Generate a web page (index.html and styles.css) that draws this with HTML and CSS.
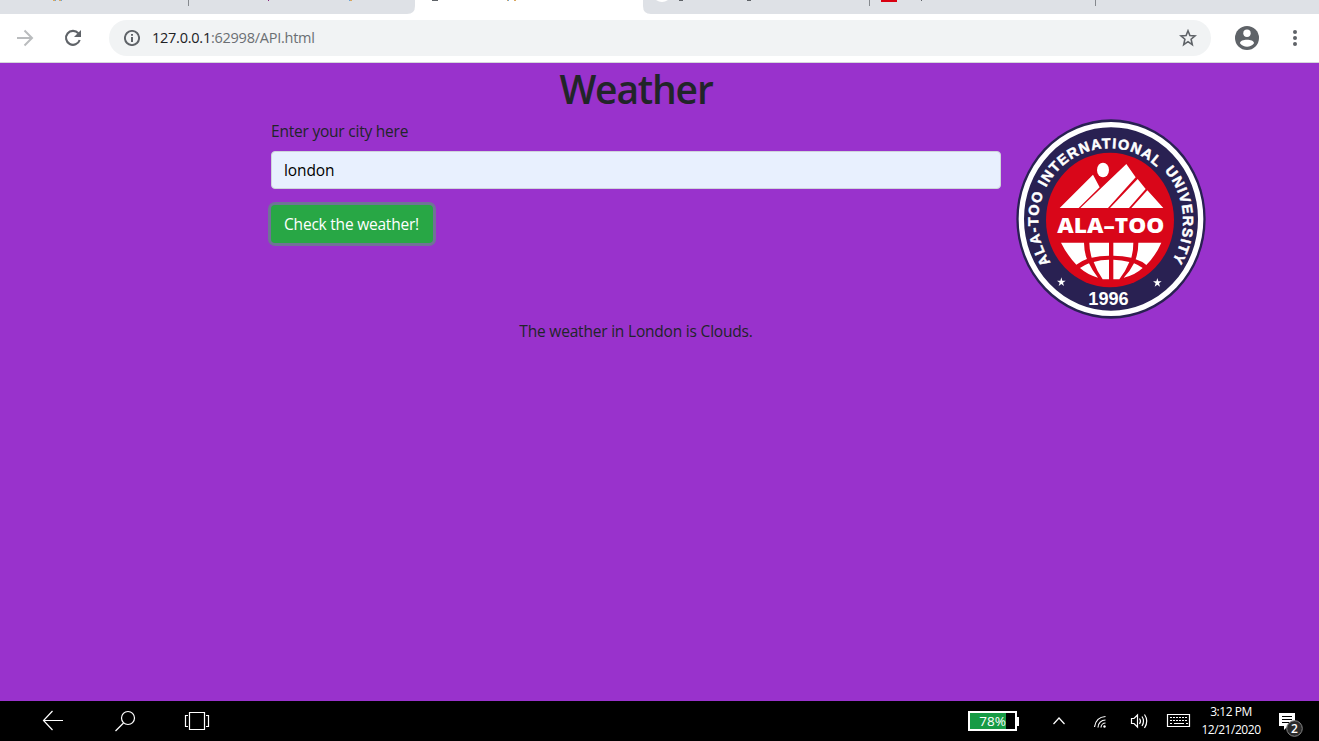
FILE: index.html
```html
<!DOCTYPE html>
<html lang="en">
<head>
<meta charset="utf-8">
<title>Weather</title>
<link rel="stylesheet" href="styles.css">
</head>
<body>
<header class="browser">
  <svg class="tabs" width="1319" height="14" viewBox="0 0 1319 14">
    <rect width="1319" height="14" fill="#dee1e6"/>
    <path d="M407 14Q415 14 415 6V0H643V6Q643 14 651 14Z" fill="#fff"/>
    <path d="M188.500 0V6M869.500 0V6M1095.500 0V6" stroke="#85898e"/>
    <path d="M881 0H897V2H881Z" fill="#d90011"/>
    <path d="M656 0Q662 4 668 0Z" fill="#fff"/>
    <path d="M53 0h2M59 0h2M350 0h2M507 0h2M514 0h2" stroke="#d9a75f" stroke-width="2"/>
    <path d="M55 0h1M61 0h1M349 0h1M508 0h1" stroke="#6aa6dc" stroke-width="2"/>
    <path d="M268 0h1" stroke="#8a2080" stroke-width="2"/>
    <path d="M432 0h6M679 0h4M747 0h4M921 0h1" stroke="#5f6368" stroke-width="2"/>
  </svg>
  <div class="toolbar">
    <svg class="forward" width="18" height="18" viewBox="0 0 18 18" fill="none" stroke="#babcbe" stroke-width="2"><path d="M1 9H16M8.500 1.500L16 9L8.500 16.500"/></svg>
    <svg class="reload" width="18" height="18" viewBox="0 0 18 18"><path d="M14.300 4.200A7 7 0 1 0 15.700 11" fill="none" stroke="#5f6368" stroke-width="2.100"/><path d="M17 1V8H10Z" fill="#5f6368"/></svg>
    <div class="omnibox">
      <svg width="16" height="16" viewBox="0 0 16 16"><circle cx="8" cy="8" r="7.100" fill="none" stroke="#5f6368" stroke-width="1.900"/><path d="M7 3.900h2v1.900H7zM7 7h2v5H7z" fill="#5f6368"/></svg>
      <span class="url"><b>127.0.0.1</b>:62998/API.html</span>
      <svg class="star" width="18" height="18" viewBox="0 0 18 18"><path d="M9 1.800L10.900 6.500L16 6.900L12.100 10.200L13.300 15.700L9 12.700L4.700 15.700L5.900 10.200L2 6.900L7.100 6.500Z" fill="none" stroke="#5f6368" stroke-width="1.600"/></svg>
    </div>
    <svg class="avatar" width="24" height="24" viewBox="0 0 24 24"><circle cx="12" cy="12" r="12" fill="#5f6368"/><circle cx="12" cy="7.300" r="3.700" fill="#fff"/><path d="M5 17.200C5 12.700 19 12.700 19 17.200C15.800 21.800 8.200 21.800 5 17.200Z" fill="#fff"/></svg>
    <svg class="more" width="4" height="16" viewBox="0 0 4 16" fill="#5f6368"><circle cx="2" cy="2" r="2"/><circle cx="2" cy="8" r="2"/><circle cx="2" cy="14" r="2"/></svg>
  </div>
</header>
<main class="page">
  <h1><span>Weather</span></h1>
  <div class="row">
    <form class="form">
      <label for="city">Enter your city here</label>
      <input id="city" class="city" type="text" value="london">
      <button class="check" type="button">Check the weather!</button>
    </form>
    <svg class="logo" width="190" height="200" viewBox="30 27 570 600">
      <ellipse cx="315" cy="327" rx="284" ry="299" fill="#292152"/>
      <ellipse cx="315" cy="327" rx="269" ry="283" fill="none" stroke="#fff" stroke-width="16"/>
      <ellipse cx="312" cy="330" rx="192" ry="202" fill="#d90619"/>
      <path id="ring" d="M134 458A213 219 0 1 1 494 443" fill="none"/>
      <text class="ringtext"><textPath href="#ring" textLength="628">ALA-TOO INTERNATIONAL</textPath></text>
      <path id="ring2" d="M475 182A213 222 0 0 1 492 462" fill="none"/>
      <text class="ringtext"><textPath href="#ring2" textLength="290">UNIVERSITY</textPath></text>
      <g fill="#fff">
        <ellipse cx="291" cy="180" rx="18" ry="22"/>
        <path d="M161 294L261 194L281 232L218 294ZM223 294L361 162L389 202L306 294ZM312 294L395 207L419 237L369 294ZM376 294L424 241L472 294Z"/>
        <path d="M165 398H234Q235 430 243 447Q225 453 211 464Q184 436 165 398ZM250 398H309V437Q281 437 257 443Q250 421 250 398ZM322 398H382Q382 422 376 443Q350 437 322 437ZM397 398H466Q449 437 421 465Q406 453 389 448Q397 424 397 398ZM222 474Q236 465 249 460Q258 481 276 503Q244 494 222 474ZM263 456Q284 449 309 449V508H290Q273 484 263 456ZM322 449Q348 450 370 456Q359 484 340 508H322ZM384 460Q397 465 410 474Q386 496 353 503Q373 483 384 460Z"/>
        <path d="M166 502L169 512H179L171 518L174 528L166 522L158 528L161 518L153 512H163ZM454 504L457 514H467L459 520L462 530L454 524L446 530L449 520L441 514H451Z"/>
      </g>
      <text class="name" x="154" y="368" textLength="321" lengthAdjust="spacingAndGlyphs">ALA–TOO</text>
      <text class="year" x="247" y="584" textLength="121" lengthAdjust="spacingAndGlyphs">1996</text>
    </svg>
  </div>
  <p class="result"><span>The weather in London is Clouds.</span></p>
</main>
<footer class="taskbar">
  <svg class="nav" width="210" height="40" viewBox="0 0 210 40" fill="none" stroke="#fff" stroke-width="1.200">
    <path d="M43.500 19.500H63M52.500 10L43.500 19.500L52.500 29"/>
    <circle cx="128" cy="17" r="6.500"/><path d="M123.500 22L115.500 30"/>
    <path d="M189.500 11.500H204.500V28.500H189.500ZM188 14.500H185.500V25.500H188M206 14.500H208.500V25.500H206"/>
  </svg>
  <div class="battery"><span>78%</span></div>
  <svg class="tray" width="140" height="40" viewBox="1051 701 140 40" fill="none" stroke="#fff" stroke-width="1.200">
    <path d="M1053.500 724L1059 718L1064.500 724"/>
    <g><path d="M1098 727.500A7.500 7.500 0 0 1 1105.500 720M1101 727.500A4.500 4.500 0 0 1 1105.500 723" /><path d="M1094.500 727Q1096 717 1105.500 716.500"/><circle cx="1104.500" cy="726.500" r="1.200" fill="#fff" stroke="none"/></g>
    <path d="M1131.500 718.500H1134L1137.500 715V727L1134 723.500H1131.500ZM1139.500 718.500Q1141.500 721 1139.500 724M1142 716.500Q1145 721 1142 726M1144.500 714.500Q1149 721 1144.500 728"/>
    <path d="M1167.500 714.500H1189.500V726.500H1167.500Z"/><path d="M1170 717.500H1188M1170 720.500H1188" stroke-dasharray="2 1"/><path d="M1170 723.500H1172M1174 723.500H1184M1186 723.500H1188"/>
  </svg>
  <div class="clock"><span class="time">3:12 PM</span><span class="date">12/21/2020</span></div>
  <svg class="notice" width="26" height="40" viewBox="1278 701 26 40">
    <path d="M1279 713H1295V726H1288L1284 730V726H1279Z" fill="#fff"/><path d="M1282 716.500H1292M1282 719.500H1292M1282 722.500H1289" stroke="#000"/>
    <circle cx="1294.500" cy="728.500" r="7.800" fill="#2b2b2b" stroke="#858585"/><text x="1294.500" y="732.500">2</text>
  </svg>
</footer>
</body>
</html>
```

FILE: styles.css
```css
* { box-sizing: border-box; }
body { margin: 0; width: 1319px; height: 741px; overflow: hidden; display: flex; flex-direction: column; font-family: "Open Sans", "Noto Sans", sans-serif; color: #212529; background: #9932cc; }
svg { display: block; flex: none; }
.browser { height: 63px; background: #fff; border-bottom: 1px solid #d5d7db; }
.toolbar { display: flex; align-items: center; height: 48px; padding-left: 16px; }
.reload { margin-left: 30px; }
.omnibox { width: 1102px; height: 36px; margin-left: 27px; padding: 0 14px 0 15px; border-radius: 18px; background: #f1f3f4; display: flex; align-items: center; }
.url { margin: -2px 0 0 12px; font-size: 14.5px; letter-spacing: -0.25px; color: #6b6f73; white-space: nowrap; }
.url b { font-weight: 400; color: #202124; }
.star { margin-left: auto; }
.avatar { margin-left: 24px; }
.more { margin-left: 34px; }
.page { flex: 1; padding-left: 271px; }
h1 { margin: 2px 0 8px; width: 730px; text-align: center; font-size: 39px; line-height: 48px; font-weight: 600; letter-spacing: -1.2px; }
.row { display: flex; gap: 15px; margin-top: -2px; }
.form { width: 730px; display: flex; flex-direction: column; align-items: flex-start; }
label { font-size: 15.5px; line-height: 24px; margin-bottom: 8px; letter-spacing: -0.22px; }
.city { width: 730px; height: 38px; padding: 6px 12px; border: 1px solid #ced4da; border-radius: 4px; background: #e8f0fe; font: 15.5px "Open Sans", sans-serif; letter-spacing: -0.1px; color: #000; }
.check { width: 162px; height: 38px; margin-top: 16px; padding: 0 1px 0 0; border: 0; border-radius: 4px; background: #28a745; color: #fff; font: 15.5px "Open Sans", sans-serif; letter-spacing: -0.22px; box-shadow: 0 0 0 3px rgba(72, 180, 97, 0.5); white-space: nowrap; }
.result { width: 730px; margin: 0; text-align: center; font-size: 15.5px; line-height: 24px; letter-spacing: -0.2px; }
.ringtext { font: bold 43px "Liberation Sans", sans-serif; fill: #fff; stroke: #fff; stroke-width: 1.5; }
.name { font: bold 65px "Open Sans", sans-serif; font-weight: 800; fill: #fff; }
.year { font: bold 54px "Liberation Sans", sans-serif; fill: #fff; }
.taskbar { height: 40px; background: #000; color: #fff; display: flex; align-items: center; }
.battery { position: relative; width: 49px; height: 20px; margin-left: 758px; border: 2px solid #fff; background: linear-gradient(90deg, #169b45 36px, #000 36px); font-size: 13.5px; line-height: 17px; text-align: center; }
.battery::after { content: ""; position: absolute; right: -4px; top: 4px; width: 2px; height: 9px; background: #fff; }
.tray { margin-left: 34px; }
.clock { width: 80px; display: flex; flex-direction: column; align-items: center; font-size: 12px; line-height: 18px; letter-spacing: -0.45px; margin-bottom: 1px; }
.notice { margin-left: 7px; }
.notice text { font: 600 12px "Open Sans", sans-serif; fill: #fff; text-anchor: middle; }
```
